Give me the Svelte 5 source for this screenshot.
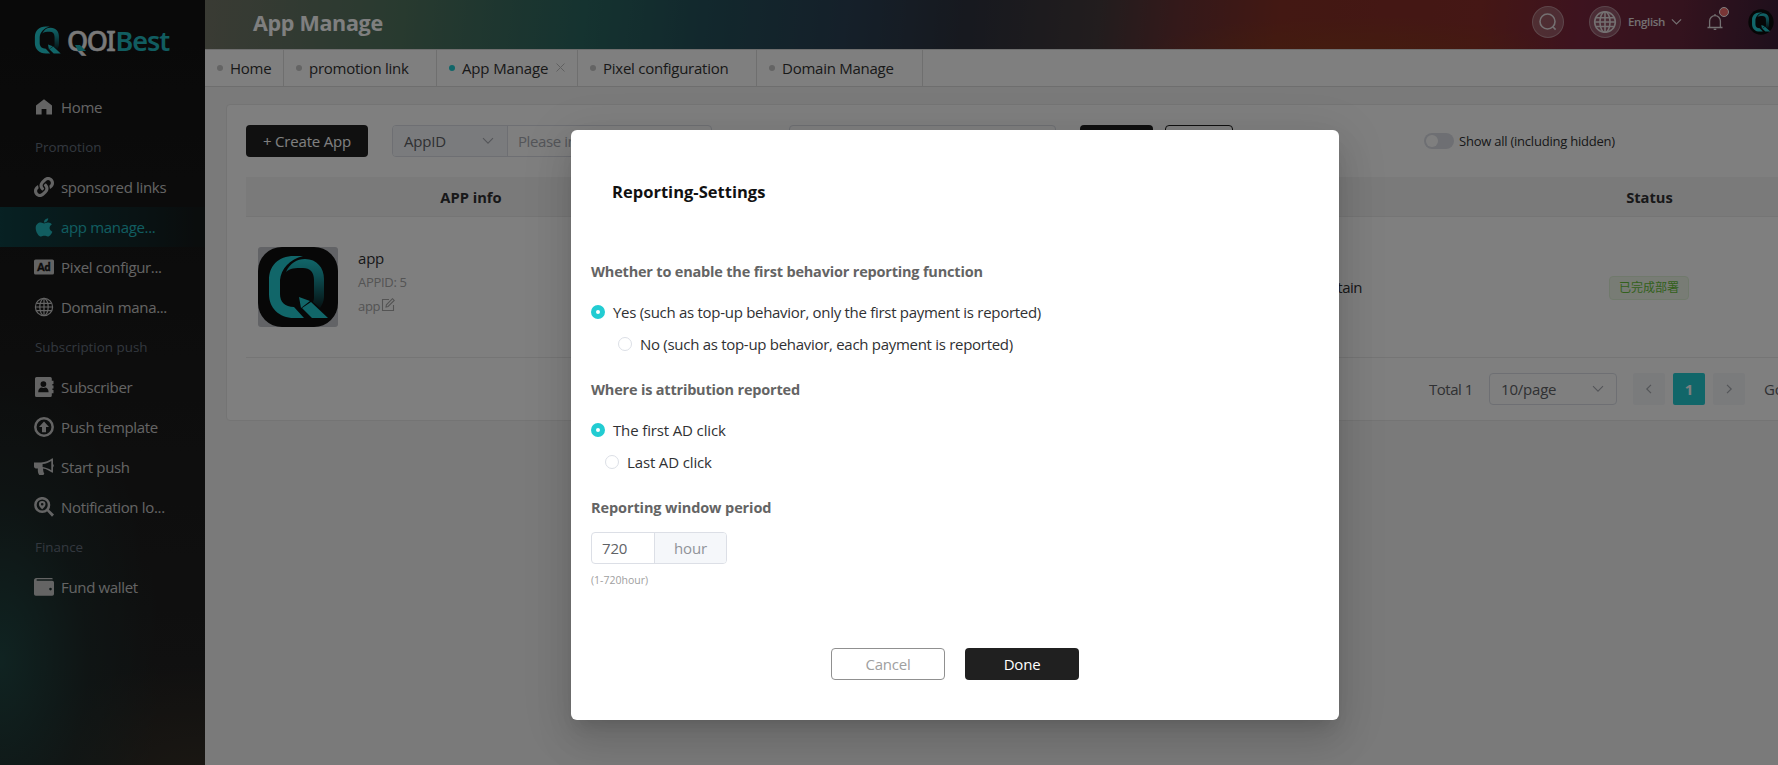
<script>
  const menu = [
    { label: 'Home', icon: 'home' },
    { label: 'Promotion', section: true },
    { label: 'sponsored links', icon: 'link' },
    { label: 'app manage...', icon: 'apple', active: true },
    { label: 'Pixel configur...', icon: 'ad' },
    { label: 'Domain mana...', icon: 'globe' },
    { label: 'Subscription push', section: true },
    { label: 'Subscriber', icon: 'contact' },
    { label: 'Push template', icon: 'up' },
    { label: 'Start push', icon: 'horn' },
    { label: 'Notification lo...', icon: 'search' },
    { label: 'Finance', section: true },
    { label: 'Fund wallet', icon: 'wallet' }
  ];
  const tabs = [
    { label: 'Home', width: 79 },
    { label: 'promotion link', width: 153 },
    { label: 'App Manage', width: 141, active: true },
    { label: 'Pixel configuration', width: 179 },
    { label: 'Domain Manage', width: 166 }
  ];
</script>

{#snippet qmark(id)}
  <defs>
    <linearGradient id={id} x1="0" y1="0" x2="0" y2="1">
      <stop offset="0" stop-color="#22ccd2" />
      <stop offset="0.35" stop-color="#1a9ca4" />
      <stop offset="1" stop-color="#0c2224" />
    </linearGradient>
  </defs>
  <path fill="#22ccd2" d="M45 9H36C20 9 11 19 11 33v14c0 14 10 24 25 24h10L36 60c-9 0-14-5-14-13V33C23 22 32 12 45 9z" />
  <path fill="url(#{id})" d="M28 25c4-9 11-13 19-13 12 0 19 9 19 20v18c0 4-2 8-4 11l-7-6c1-2 1-4 1-6V33c0-8-4-12-11-12-8 0-13 0-17 4z" />
  <path fill="#22ccd2" d="M41 50l11 4-9 7zM44 61l9-6 17 16H54z" />
{/snippet}

{#snippet chevron()}
  <svg class="chev" viewBox="0 0 12 12"><path d="M1 3.200l5 5 5-5" /></svg>
{/snippet}

{#snippet globe()}
  <circle cx="10" cy="10" r="8.600" /><ellipse cx="10" cy="10" rx="4.200" ry="8.600" />
  <path d="M10 1.400v17.200M2.400 6.400h15.200M1.400 10h17.200M2.400 13.700h15.200" />
{/snippet}

<div class="viewport">
<div class="app">
  <aside>
    <div class="logo">
      <svg width="28" height="28" viewBox="10 8 62 64">{@render qmark('logoShade')}</svg>
      <div class="word"><span>QOI</span><b>Best</b>
        <svg class="tail" width="11" height="7" viewBox="0 0 11 7"><path d="M0 0h5l6 6H3z" fill="#1cb4ba" /></svg>
      </div>
    </div>
    <nav>
      {#each menu as m}
        {#if m.section}
          <div class="section">{m.label}</div>
        {:else}
          <div class="item" class:active={m.active}>
            <svg width="20" height="20" viewBox={m.icon === 'link' ? '0 0 512 512' : m.icon === 'apple' ? '-64 0 512 512' : '0 0 20 20'}>
              {#if m.icon === 'home'}
                <path d="M10 2.200L18 8.600v9H12.400v-5.600H7.600v5.600H2v-9z" />
              {:else if m.icon === 'link'}
                <path d="M326.612 185.391c59.747 59.809 58.927 155.698.36 214.59-.11.12-.24.25-.36.37l-67.2 67.2c-59.27 59.27-155.699 59.262-214.96 0-59.27-59.26-59.27-155.7 0-214.96l37.106-37.106c9.84-9.84 26.786-3.3 27.294 10.606.648 17.722 3.826 35.527 9.69 52.721 1.986 5.822.567 12.262-3.783 16.612l-13.087 13.087c-28.026 28.026-28.905 73.66-1.155 101.96 28.024 28.579 74.086 28.749 102.325.51l67.2-67.19c28.191-28.191 28.073-73.757 0-101.83-3.701-3.694-7.429-6.564-10.341-8.569a16.037 16.037 0 0 1-6.947-12.606c-.396-10.567 3.348-21.456 11.698-29.806l21.054-21.055c5.521-5.521 14.182-6.199 20.584-1.731a152.482 152.482 0 0 1 20.522 17.197zM467.547 44.449c-59.261-59.262-155.69-59.27-214.96 0l-67.2 67.2c-.12.12-.25.25-.36.37-58.566 58.892-59.387 154.781.36 214.59a152.454 152.454 0 0 0 20.521 17.196c6.402 4.468 15.064 3.789 20.584-1.731l21.054-21.055c8.35-8.35 12.094-19.239 11.698-29.806a16.037 16.037 0 0 0-6.947-12.606c-2.912-2.005-6.64-4.875-10.341-8.569-28.073-28.073-28.191-73.639 0-101.83l67.2-67.19c28.239-28.239 74.3-28.069 102.325.51 27.75 28.3 26.872 73.934-1.155 101.96l-13.087 13.087c-4.35 4.35-5.769 10.79-3.783 16.612 5.864 17.194 9.042 34.999 9.69 52.721.509 13.906 17.454 20.446 27.294 10.606l37.106-37.106c59.271-59.259 59.271-155.699.001-214.959z" />
              {:else if m.icon === 'apple'}
                <path transform="translate(-25 -4) scale(1.13 1.05)" d="M318.7 268.7c-.2-36.7 16.4-64.4 50-84.8-18.8-26.9-47.2-41.7-84.7-44.6-35.5-2.8-74.3 20.7-88.5 20.7-15 0-49.4-19.7-76.4-19.7C63.3 141.2 4 184.8 4 273.5q0 39.3 14.4 81.2c12.8 36.7 59 126.7 107.2 125.2 25.2-.6 43-17.9 75.8-17.9 31.8 0 48.3 17.9 76.4 17.9 48.6-.7 90.4-82.5 102.6-119.3-65.2-30.7-61.7-90-61.7-91.9zm-56.6-164.2c27.3-32.4 24.8-61.9 24-72.5-24.1 1.4-52 16.4-67.9 34.9-17.5 19.8-27.8 44.3-25.6 71.9 26.1 2 49.9-11.4 69.5-34.3z" />
              {:else if m.icon === 'ad'}
                <rect y="2.400" width="20" height="15.200" rx="1.600" />
                <text x="10" y="14" text-anchor="middle">Ad</text>
              {:else if m.icon === 'globe'}
                <g class="line">{@render globe()}</g>
              {:else if m.icon === 'contact'}
                <path fill-rule="evenodd" d="M2.500 0h13.800q1.500 0 1.500 1.500V3.700h1.700v3.200h-1.100v1.500h1.100v3.200h-1.100v1.500h1.100v3.200h-1.700v2.200q0 1.500-1.500 1.500H2.500Q1 20 1 18.500v-17Q1 0 2.500 0zM9.400 4.200a2.900 2.900 0 1 0 0 5.800 2.900 2.900 0 0 0 0-5.800zM4.200 15.200h10.400c0-3-1.800-4.600-3.400-4.600-1 .6-2.600.6-3.600 0-1.600 0-3.400 1.600-3.400 4.600z" />
              {:else if m.icon === 'up'}
                <circle cx="10" cy="10" r="8.700" fill="none" stroke="currentColor" stroke-width="2.500" />
                <path d="M10 4.500l5 5.500h-3v5.200H8V10H5z" />
              {:else if m.icon === 'horn'}
                <path fill-rule="evenodd" d="M0 5.400h7C11.500 5.200 15 3.600 18 1.400q1-.6 1 .6v5.200q1.600 1 0 3.200V15q0 1.200-1 .6c-3-2.200-5.500-3.600-9-4.200.2 2.600.6 4 1.300 5.400l-1 1.300H5.300C4 16.400 3.600 14 3.900 11.400H1.700Q0 11 0 9.500zM8.600 7v3c3 .4 6 1.600 8.700 3.200V4C14.800 5.600 12 6.700 8.600 7z" />
              {:else if m.icon === 'search'}
                <circle cx="8.200" cy="8" r="6.800" fill="none" stroke="currentColor" stroke-width="2.500" />
                <path d="M12.600 13.800l1.700-1.700L20 17.600 18 19.800z" />
                <path fill-rule="evenodd" d="M8.200 3.900a3.300 3.300 0 0 1 3.300 3.300c0 2-1.900 3.700-3.300 5.100-1.400-1.400-3.300-3.100-3.300-5.100a3.300 3.300 0 0 1 3.300-3.300zm0 2.100a1.300 1.300 0 1 0 0 2.600 1.300 1.300 0 0 0 0-2.600z" />
              {:else}
                <path fill-rule="evenodd" d="M2.500 1h15q1.300 0 1.300 1.300H3.400q-1 0-1 .7t1 .8h14.800Q20 3.800 20 5.500v11.600q0 1.700-1.800 1.700H1.800Q0 18.800 0 17V3.500Q0 1 2.500 1zm14 9.800a1.300 1.300 0 1 0 0 2.600 1.300 1.300 0 0 0 0-2.600z" />
              {/if}
            </svg>
            <span>{m.label}</span>
          </div>
        {/if}
      {/each}
    </nav>
  </aside>

  <main>
    <header>
      <h1>App Manage</h1>
      <div class="tools">
        <div class="round"><svg width="20" height="20" viewBox="0 0 20 20"><circle cx="9.500" cy="9.500" r="7.500" /><path d="M14.800 14.800l2.800 2.800" /></svg></div>
        <div class="round second"><svg width="24" height="24" viewBox="0 0 20 20">{@render globe()}</svg></div>
        <span class="lang">English</span>
        {@render chevron()}
        <div class="bell">
          <svg width="18" height="18" viewBox="0 0 18 18"><path d="M1.500 14.500h15M3.600 14.500V8a5.400 5.400 0 0 1 10.800 0v6.500M9 1v1.600M7.700 16.300h2.600" /></svg>
          <i></i>
        </div>
        <svg class="avatar" width="26" height="26" viewBox="-2 -2 84 84"><circle cx="40" cy="40" r="41" fill="#0c0c0c" />{@render qmark('avatarShade')}</svg>
      </div>
    </header>

    <div class="tabs">
      {#each tabs as t}
        <div class="tab" class:on={t.active} style="width:{t.width}px">
          <i></i><span>{t.label}</span>
          {#if t.active}<svg width="9" height="9" viewBox="0 0 9 9"><path d="M.5.5l8 8M8.500.5l-8 8" /></svg>{/if}
        </div>
      {/each}
    </div>

    <div class="card">
      <div class="filters">
        <div class="btn create">+ Create App</div>
        <div class="combo">
          <div class="pick"><span>AppID</span>{@render chevron()}</div>
          <div class="field">Please input</div>
        </div>
        <div class="box"></div>
        <div class="btn query"></div>
        <div class="btn reset"></div>
        <div class="switch"></div>
        <span class="show">Show all (including hidden)</span>
      </div>

      <div class="row head"><div>APP info</div><div></div><div>Status</div><div></div></div>
      <div class="row body">
        <div class="info">
          <svg class="appicon" width="80" height="80" viewBox="0 0 80 80"><rect width="80" height="80" rx="24" fill="#0e0e0e" />{@render qmark('appShade')}</svg>
          <div class="meta">
            <span class="name">app</span>
            <span class="sub">APPID: 5</span>
            <span class="sub alias">app<svg width="14" height="14" viewBox="0 0 14 14"><path d="M8 1.500H1.500v11h11V7M5 9l.4-2.200L11.500.7l1.700 1.700-6.100 6.100z" /></svg></span>
          </div>
        </div>
        <div class="domain">maintain</div>
        <div><span class="tag">已完成部署</span></div>
        <div></div>
      </div>

      <div class="pager">
        <span class="total">Total 1</span>
        <div class="size"><span>10/page</span>{@render chevron()}</div>
        <div class="pg prev"><svg width="10" height="10" viewBox="0 0 10 10"><path d="M7 .8L2.800 5 7 9.200" /></svg></div>
        <div class="pg cur">1</div>
        <div class="pg"><svg width="10" height="10" viewBox="0 0 10 10"><path d="M3 .8L7.200 5 3 9.200" /></svg></div>
        <span class="goto">Go to</span>
      </div>
    </div>
  </main>

  <div class="overlay">
    <div class="dialog">
      <h2>Reporting-Settings</h2>
      <h3>Whether to enable the first behavior reporting function</h3>
      <label class="yes"><i class="dot on"></i><span>Yes (such as top-up behavior, only the first payment is reported)</span></label>
      <label class="no"><i class="dot"></i><span>No (such as top-up behavior, each payment is reported)</span></label>
      <h3>Where is attribution reported</h3>
      <label class="first"><i class="dot on"></i><span>The first AD click</span></label>
      <label class="last"><i class="dot"></i><span>Last AD click</span></label>
      <h3 class="window">Reporting window period</h3>
      <div class="period"><div class="num">720</div><div class="unit">hour</div></div>
      <small>(1-720hour)</small>
      <div class="actions"><div class="btn cancel">Cancel</div><div class="btn done">Done</div></div>
    </div>
  </div>
</div>
</div>

<style>
  :global(body) { overflow: hidden; }
  * { box-sizing: border-box; }
  .viewport { width: 100%; height: 765px; overflow: hidden; }
  .app {
    position: relative; display: flex; width: 1910px; height: 765px; overflow: hidden;
    background: #f5f5f5; color: #303133;
    font: 15px/20px "Open Sans", "Noto Sans", "Noto Sans CJK SC", sans-serif;
    letter-spacing: -.2px;
  }
  svg { flex: none; display: block; }
  aside {
    width: 205px; flex: none; height: 765px;
    background:
      radial-gradient(ellipse 160px 290px at 0 660px, rgba(32, 78, 74, .85), rgba(28, 56, 54, .4) 55%, transparent),
      radial-gradient(ellipse 190px 130px at 200px 790px, rgba(64, 54, 40, .7), transparent),
      linear-gradient(#121212, #1b1b1b 400px, #222);
  }
  .logo { display: flex; height: 87px; padding: 26px 0 0 34px; }
  .word { position: relative; display: flex; align-items: center; height: 30px; padding-left: 5px; font: 500 27px/30px "Noto Sans", sans-serif; color: #f2f2f2; }
  .word span { letter-spacing: -1.500px; -webkit-text-stroke: .5px #f2f2f2; }
  .word b { color: #22bac1; font-weight: 600; letter-spacing: -1px; margin-left: 1px; }
  .tail { position: absolute; left: 13px; top: 19px; }
  .item, .section { height: 40px; display: flex; align-items: center; color: #c9c9c9; white-space: nowrap; }
  .item { padding-left: 34px; gap: 7px; }
  .item span { letter-spacing: -.33px; }
  .item svg { fill: currentColor; }
  .item svg text { font: 900 10.500px Lato, sans-serif; letter-spacing: 0; fill: #161616; stroke: #161616; stroke-width: .4; }
  .item .line { fill: none; stroke: currentColor; stroke-width: 1.200; }
  .section { padding-left: 35px; color: #66707e; font-size: 13.400px; letter-spacing: 0; }
  .item.active { color: #22bac1; background: linear-gradient(90deg, #0e4246, #141a1b 95%); }

  main { flex: 1; min-width: 0; }
  header {
    display: flex; align-items: center; justify-content: space-between; height: 49px; padding: 0 136px 0 48px;
    background:
      radial-gradient(ellipse 220px 42px at 1150px 58px, rgba(138, 70, 20, .5), transparent),
      linear-gradient(96deg, #747668, #50745f 200px, #2a6660 380px, #24505a 500px, #2a4054 640px, #2e323e 760px, #443a3c 890px, #683234 970px, #863026 1070px, #8a2e2a 1270px, #7a263e 1370px, #68263c 1470px, #381e38 1580px);
  }
  h1 { margin: 0 0 4px; font-size: 21.500px; line-height: 28px; color: #fff; letter-spacing: -.3px; }
  .tools { display: flex; align-items: center; height: 44px; margin-bottom: 5px; color: #e8e0e2; }
  .tools svg { fill: none; stroke: currentColor; stroke-width: 1.600; }
  .round { width: 32px; height: 32px; border-radius: 50%; display: flex; align-items: center; justify-content: center; background: rgba(255, 255, 255, .24); border: 1px solid rgba(255, 255, 255, .3); }
  .second { margin-left: 25px; }
  .second svg { stroke-width: 1.300; }
  .lang { width: 38px; margin: 0 5px 0 7px; font-size: 11.500px; font-weight: 600; letter-spacing: -.35px; }
  .tools .chev { width: 11px; stroke-width: 1.300; }
  .bell { position: relative; margin: 0 24px 0 24px; }
  .bell svg { stroke-width: 1.300; }
  .bell i { position: absolute; right: -5px; top: -6px; width: 10px; height: 10px; border-radius: 50%; background: #f56c6c; border: 1px solid #fff; }
  .tools .avatar { stroke: none; }

  .tabs { display: flex; height: 38px; background: #fff; border-top: 1px solid #dcdcdc; border-bottom: 1px solid #dcdcdc; }
  .tab { display: flex; align-items: center; padding: 0 0 1px 12px; border-right: 1px solid #dedede; letter-spacing: -.25px; color: #333; white-space: nowrap; }
  .tab i { width: 6px; height: 6px; margin-right: 7px; border-radius: 50%; background: #c8c8c8; }
  .tab.on i { background: #22ccd2; }
  .tab.on { letter-spacing: -.15px; }
  .tab svg { margin-left: 8px; stroke: #c0c0c0; fill: none; }

  .card { margin: 17px 20px 0 21px; height: 317px; padding: 20px 19px; background: #fff; border: 1px solid #e8e8e8; border-radius: 4px; }
  .filters { display: flex; align-items: center; height: 32px; margin-bottom: 20px; }
  .btn { height: 32px; display: flex; align-items: center; justify-content: center; border-radius: 4px; background: #202020; color: #fff; flex: none; }
  .create { width: 122px; }
  .combo { display: flex; width: 320px; height: 32px; margin-left: 24px; border: 1px solid #dcdfe6; border-radius: 4px; overflow: hidden; }
  .pick { width: 115px; display: flex; align-items: center; justify-content: space-between; padding: 0 13px 0 11px; background: #f5f7fa; border-right: 1px solid #dcdfe6; color: #606266; }
  .chev { width: 12px; height: 12px; fill: none; stroke: #a8abb2; stroke-width: 1.100; }
  .field { padding: 5px 0 0 10px; color: #a8abb2; letter-spacing: -.4px; }
  .box { width: 267px; height: 32px; margin-left: 77px; border: 1px solid #dcdfe6; border-radius: 4px; }
  .query { width: 73px; margin-left: 24px; }
  .reset { width: 68px; margin-left: 12px; background: #fff; border: 1px solid #202020; }
  .switch { width: 30px; height: 16px; margin-left: 191px; border-radius: 8px; background: #dcdfe6; padding: 2px; }
  .switch::before { content: ""; display: block; width: 12px; height: 12px; border-radius: 50%; background: #fff; }
  .show { margin-left: 5px; font-size: 13px; letter-spacing: -.23px; }

  .row { display: grid; grid-template-columns: 450px 753px 401px 1fr; align-items: center; text-align: center; border-bottom: 1px solid #ebebeb; }
  .head { height: 40px; background: #f4f4f4; font-weight: 700; font-size: 14.700px; letter-spacing: 0; }
  .body { height: 141px; }
  .info { display: flex; padding-left: 12px; gap: 20px; }
  .appicon { background: #c4c6cc; border-radius: 3px; }
  .meta { display: flex; flex-direction: column; align-items: flex-start; gap: 4px; padding: 1px 0 0; }
  .sub { color: #a8a8a8; font-size: 13px; line-height: 20px; letter-spacing: -.3px; }
  .alias { display: flex; gap: 1px; }
  .alias svg { margin-top: 2px; fill: none; stroke: #a8a8a8; stroke-width: 1.100; }
  .domain { text-align: right; padding-right: 87px; letter-spacing: -.5px; }
  .tag { display: inline-block; width: 80px; height: 24px; line-height: 22px; margin: 1px 1px 0 0; border: 1px solid #e1f3d8; border-radius: 4px; background: #f0f9eb; color: #67c23a; font-size: 12px; letter-spacing: 0; }
  .pager { display: flex; align-items: center; padding: 15px 0 0 1183px; color: #606266; }
  .total { width: 60px; flex: none; letter-spacing: -.5px; }
  .size { width: 128px; height: 32px; flex: none; display: flex; align-items: center; justify-content: space-between; padding: 0 12px 0 11px; border: 1px solid #dcdfe6; border-radius: 4px; }
  .pg { width: 32px; height: 32px; flex: none; margin-left: 8px; display: flex; align-items: center; justify-content: center; border-radius: 2px; background: #f5f6f9; }
  .pg svg { fill: none; stroke: #a8abb2; stroke-width: 1.200; }
  .prev { margin-left: 16px; }
  .cur { background: #22ccd2; color: #fff; font-weight: 700; }
  .goto { margin-left: 19px; white-space: nowrap; }

  .overlay { position: absolute; inset: 0; display: flex; justify-content: center; align-items: flex-start; padding-top: 130px; background: rgba(0, 0, 0, .5); }
  .dialog { width: 768px; height: 590px; padding: 52px 20px 0; border-radius: 6px; background: #fff; box-shadow: 0 11px 15px -7px rgba(0, 0, 0, .12), 0 24px 38px 3px rgba(0, 0, 0, .07), 0 9px 46px 8px rgba(0, 0, 0, .09); }
  h2 { margin: 0 0 60px 21px; font-size: 16.500px; line-height: 20px; font-weight: 700; color: #111; letter-spacing: .02px; }
  h3 { margin: 0; font-size: 14.500px; line-height: 20px; font-weight: 700; color: #646464; letter-spacing: -.19px; }
  .window { letter-spacing: -.1px; }
  label { display: flex; align-items: center; height: 32px; letter-spacing: -.29px; }
  .yes, .first { margin-top: 14px; }
  .no, .last { margin-bottom: 20px; }
  .no { padding-left: 27px; }
  .last { padding-left: 14px; }
  .first, .last { letter-spacing: -.14px; }
  .dot { width: 14px; height: 14px; border-radius: 50%; border: 1px solid #dcdfe6; margin-right: 8px; }
  .dot.on { border: 5px solid #22ccd2; }
  .period { display: flex; width: 136px; height: 32px; margin-top: 14px; border: 1px solid #dcdfe6; border-radius: 4px; overflow: hidden; }
  .num { width: 63px; padding: 5px 0 0 10px; color: #606266; border-right: 1px solid #dcdfe6; }
  .unit { flex: 1; padding-top: 5px; text-align: center; background: #f5f7fa; color: #909399; }
  small { display: block; margin-top: 6px; font-size: 10.500px; line-height: 20px; color: #a0a0a0; letter-spacing: 0; }
  .actions { display: flex; justify-content: center; gap: 20px; margin-top: 58px; }
  .actions .btn { width: 114px; }
  .actions .done { font-weight: 500; }
  .actions .cancel { background: #fff; border: 1px solid #909090; color: #a0a0a0; }
</style>
